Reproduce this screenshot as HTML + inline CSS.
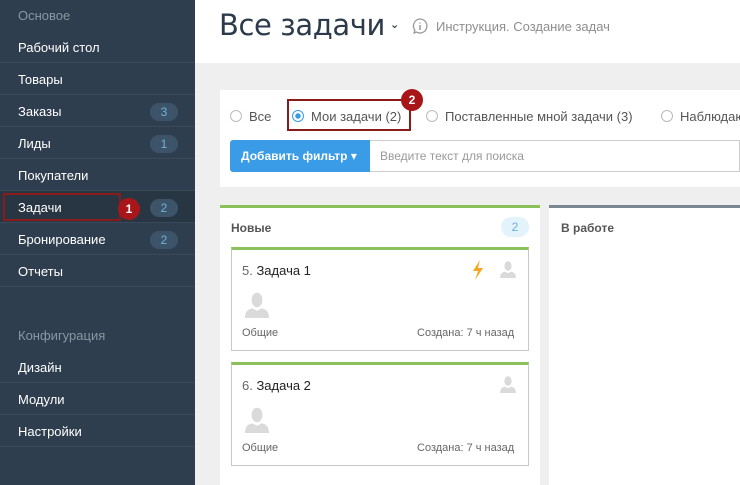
<!DOCTYPE html>
<html><head><meta charset="utf-8"><style>
*{margin:0;padding:0;box-sizing:border-box}
body{width:740px;height:485px;overflow:hidden;font-family:"Liberation Sans","DejaVu Sans",sans-serif;background:#efefef;position:relative}
.a{position:absolute}
#sb{left:0;top:0;width:195px;height:485px;background:#2f3e4f}
.it{position:absolute;left:0;width:195px;height:32px;border-bottom:1px solid #3b4a5a;color:#fff;font-size:13px;line-height:34px;padding-left:18px}
.hd{position:absolute;left:18px;color:#8a96a2;font-size:13px}
.bd{position:absolute;left:150px;top:8px;width:28px;height:18px;border-radius:9px;background:#3d5468;color:#6fb0e0;font-size:12px;line-height:18px;text-align:center}
.card{position:absolute;left:231px;width:298px;height:104px;background:#fff;border:1px solid #c8c8c8;border-top:3px solid #8bc15a}
</style></head><body>
<div class="a" id="sb">
<div class="hd" style="top:8px">Основое</div>
<div class="it" style="top:31px">Рабочий стол</div>
<div class="it" style="top:63px">Товары</div>
<div class="it" style="top:95px">Заказы<div class="bd">3</div></div>
<div class="it" style="top:127px">Лиды<div class="bd">1</div></div>
<div class="it" style="top:159px">Покупатели</div>
<div class="it" style="top:191px;background:#283543">Задачи<div class="bd">2</div></div>
<div class="it" style="top:223px">Бронирование<div class="bd">2</div></div>
<div class="it" style="top:255px">Отчеты</div>
<div class="hd" style="top:328px">Конфигурация</div>
<div class="it" style="top:351px">Дизайн</div>
<div class="it" style="top:383px">Модули</div>
<div class="it" style="top:415px">Настройки</div>
</div>
<div class="a" style="left:3px;top:193px;width:118px;height:28px;border:2px solid #8b1a1a"></div>
<div class="a" style="left:118px;top:198px;width:22px;height:22px;border-radius:50%;background:#a8161a;color:#fff;font-size:12px;font-weight:bold;text-align:center;line-height:22px">1</div>

<div class="a" style="left:195px;top:0;width:545px;height:63px;background:#fff"></div>
<div class="a" style="left:219px;top:8px;font-size:29px;color:#2c3a4b;font-family:'DejaVu Sans',sans-serif;letter-spacing:-0.4px">Все задачи</div>
<div class="a" style="left:390px;top:18px;font-size:11px;color:#2c3a4b;font-weight:bold">&#8964;</div>
<svg class="a" style="left:411px;top:17px" width="18" height="18" viewBox="0 0 18 18"><path d="M9 2a7 7 0 1 1-3.5 13.1L3 16l.9-2.8A7 7 0 0 1 9 2z" fill="none" stroke="#9a9a9a" stroke-width="1.3"/><path d="M9 8v5M9 5.5v1" stroke="#9a9a9a" stroke-width="1.5"/></svg>
<div class="a" style="left:436px;top:19px;font-size:13px;color:#8e8e8e">Инструкция. Создание задач</div>

<div class="a" style="left:220px;top:90px;width:520px;height:97px;background:#fff"></div>
<div class="a" style="left:230px;top:110px;width:12px;height:12px;border-radius:50%;border:1px solid #bbb"></div>
<div class="a" style="left:249px;top:109px;font-size:13px;color:#555">Все</div>
<div class="a" style="left:292px;top:110px;width:12px;height:12px;border-radius:50%;border:1px solid #3a9be6;background:radial-gradient(#3a9be6 35%,#fff 42%)"></div>
<div class="a" style="left:311px;top:109px;font-size:13px;color:#555">Мои задачи (2)</div>
<div class="a" style="left:426px;top:110px;width:12px;height:12px;border-radius:50%;border:1px solid #bbb"></div>
<div class="a" style="left:445px;top:109px;font-size:13px;color:#555">Поставленные мной задачи (3)</div>
<div class="a" style="left:661px;top:110px;width:12px;height:12px;border-radius:50%;border:1px solid #bbb"></div>
<div class="a" style="left:680px;top:109px;font-size:13px;color:#555;white-space:nowrap">Наблюдаю</div>
<div class="a" style="left:287px;top:99px;width:124px;height:32px;border:2px solid #8b1a1a"></div>
<div class="a" style="left:401px;top:89px;width:22px;height:22px;border-radius:50%;background:#a8161a;color:#fff;font-size:12px;font-weight:bold;text-align:center;line-height:22px">2</div>
<div class="a" style="left:230px;top:140px;width:140px;height:32px;background:#3a9be6;border-radius:3px 0 0 3px;color:#fff;font-size:12px;font-weight:bold;line-height:32px;padding-left:11px">Добавить фильтр &#9662;</div>
<div class="a" style="left:370px;top:140px;width:370px;height:32px;border:1px solid #ccc;border-left:none;color:#999;font-size:12px;line-height:31px;padding-left:10px">Введите текст для поиска</div>

<div class="a" style="left:220px;top:205px;width:320px;height:280px;background:#fff;border-top:3px solid #8bc15a"></div>
<div class="a" style="left:231px;top:221px;font-size:12px;font-weight:bold;color:#555">Новые</div>
<div class="a" style="left:501px;top:217px;width:28px;height:20px;border-radius:10px;background:#e3f3fc;color:#6aaedc;font-size:12px;text-align:center;line-height:20px">2</div>
<div class="a" style="left:549px;top:205px;width:191px;height:280px;background:#fff;border-top:3px solid #7b8894"></div>
<div class="a" style="left:561px;top:221px;font-size:12px;font-weight:bold;color:#555">В работе</div>

<div class="card" style="top:247px"></div>
<div class="a" style="left:242px;top:263px;font-size:13px;color:#222"><span style="color:#666">5.</span> Задача 1</div>
<svg class="a" style="left:471px;top:260px" width="14" height="20" viewBox="0 0 14 20"><path d="M9 0L2 11h5l-3 9 8-12H7z" fill="#f5a623"/></svg>
<div class="a" style="left:242px;top:327px;font-size:11px;color:#666">Общие</div>
<div class="a" style="left:417px;top:327px;font-size:11px;color:#666">Создана: 7 ч назад</div>

<div class="card" style="top:362px"></div>
<div class="a" style="left:242px;top:378px;font-size:13px;color:#222"><span style="color:#666">6.</span> Задача 2</div>
<div class="a" style="left:242px;top:442px;font-size:11px;color:#666">Общие</div>
<div class="a" style="left:417px;top:442px;font-size:11px;color:#666">Создана: 7 ч назад</div>

<svg class="a" style="left:0;top:0" width="740" height="485">
<defs><g id="p"><ellipse cx="0" cy="-5" rx="4.5" ry="6"/><path d="M-10 10Q-10 3-4 2L0 4L4 2Q10 3 10 10Z"/></g></defs>
<g fill="#dadada">
<use href="#p" transform="translate(508,270) scale(.8)"/>
<use href="#p" transform="translate(257,306) scale(1.2)"/>
<use href="#p" transform="translate(508,385) scale(.8)"/>
<use href="#p" transform="translate(257,421) scale(1.2)"/>
</g></svg>
</body></html>
